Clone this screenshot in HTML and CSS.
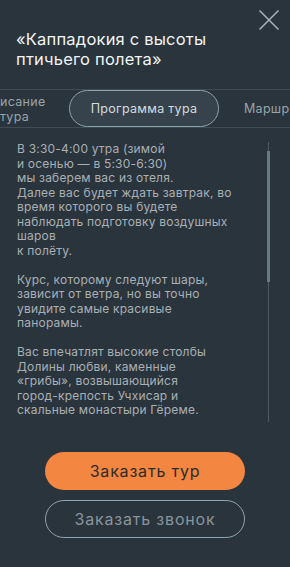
FILE: index.html
```html
<!DOCTYPE html>
<html lang="ru">
<head>
  <meta charset="UTF-8" />
  <title>Программа тура</title>
  <link rel="stylesheet" href="styles.css">
</head>
<body>
  <div class="modal">
    <button class="close" type="button" aria-label="Закрыть">
      <svg width="22" height="22" viewBox="0 0 22 22">
        <path d="M1.5 1.5 L20.5 20.5 M20.5 1.5 L1.5 20.5" stroke="#a9b3b9" stroke-width="1.5" fill="none" />
      </svg>
    </button>

    <h1 class="title">«Каппадокия с высоты<br>птичьего полета»</h1>

    <div class="tabs">
      <div class="tab tab-left">исание<br>тура</div>
      <div class="tab tab-active">Программа тура</div>
      <div class="tab tab-right">Маршр</div>
    </div>

    <div class="content">
      <div class="text">
        <p>В 3:30-4:00 утра (зимой<br>и осенью — в 5:30-6:30)<br>мы заберем вас из отеля.<br>Далее вас будет ждать завтрак, во<br>время которого вы будете<br>наблюдать подготовку воздушных<br>шаров<br>к полёту.</p>
        <p>Курс, которому следуют шары,<br>зависит от ветра, но вы точно<br>увидите самые красивые<br>панорамы.</p>
        <p>Вас впечатлят высокие столбы<br>Долины любви, каменные<br>«грибы», возвышающийся<br>город-крепость Учхисар и<br>скальные монастыри Гёреме.</p>
      </div>
      <div class="scrollbar">
        <div class="thumb"></div>
      </div>
    </div>

    <div class="actions">
      <button class="btn btn-primary" type="button">Заказать тур</button>
      <button class="btn btn-outline" type="button">Заказать звонок</button>
    </div>
  </div>
</body>
</html>
```

FILE: styles.css
```css
html, body { margin: 0; padding: 0; }
body { background: #29343c; font-family: Inter, "Noto Sans", sans-serif; width: 290px; height: 567px; overflow: hidden; }
.modal { position: relative; display: flex; flex-direction: column; height: 567px; }

.close { position: absolute; top: 9px; right: 10px; background: none; border: 0; padding: 0; width: 22px; height: 22px; cursor: pointer; }
.close svg { display: block; }

.title { margin: 29px 0 0; padding: 0 16px; font-size: 16.5px; font-weight: normal; line-height: 20px; letter-spacing: 0.2px; color: #f2f4f5; }

.tabs { display: flex; align-items: center; margin-top: 20px; height: 37px; border-top: 1px solid #3f4c55; border-bottom: 1px solid #3f4c55; white-space: nowrap; overflow: hidden; }
.tab { font-size: 12.5px; letter-spacing: 0.3px; color: #9aa4aa; }
.tab-left { width: 69px; flex: none; line-height: 15px; padding-top: 1px; box-sizing: border-box; }
.tab-active { flex: none; width: 150px; height: 37px; margin-top: -1px; margin-bottom: -1px; box-sizing: border-box; border: 1px solid #8da2ad; border-radius: 19px; background: #36434c; color: #d5dbde; display: flex; align-items: center; justify-content: center; }
.tab-right { margin-left: 25px; }

.content { display: flex; margin-top: 14px; height: 280px; }
.text { flex: 1; padding-left: 17px; font-size: 12px; line-height: 14.5px; letter-spacing: 0.2px; color: #a9b0b5; white-space: nowrap; overflow: hidden; }
.text p { margin: 0 0 14.5px; }
.scrollbar { width: 1px; margin-right: 21px; background: #4c5b64; position: relative; }
.thumb { position: absolute; left: -1px; top: 9px; width: 3px; height: 131px; background: #667984; }

.actions { display: flex; flex-direction: column; align-items: center; gap: 10px; margin-top: 30px; }
.btn { width: 200px; height: 38px; border-radius: 19px; font-family: inherit; font-size: 16px; letter-spacing: 0.8px; cursor: pointer; }
.btn-primary { background: #f38641; border: 0; color: #2b2b2b; }
.btn-outline { background: transparent; border: 1px solid #8ea4b2; color: #89959c; }
```
